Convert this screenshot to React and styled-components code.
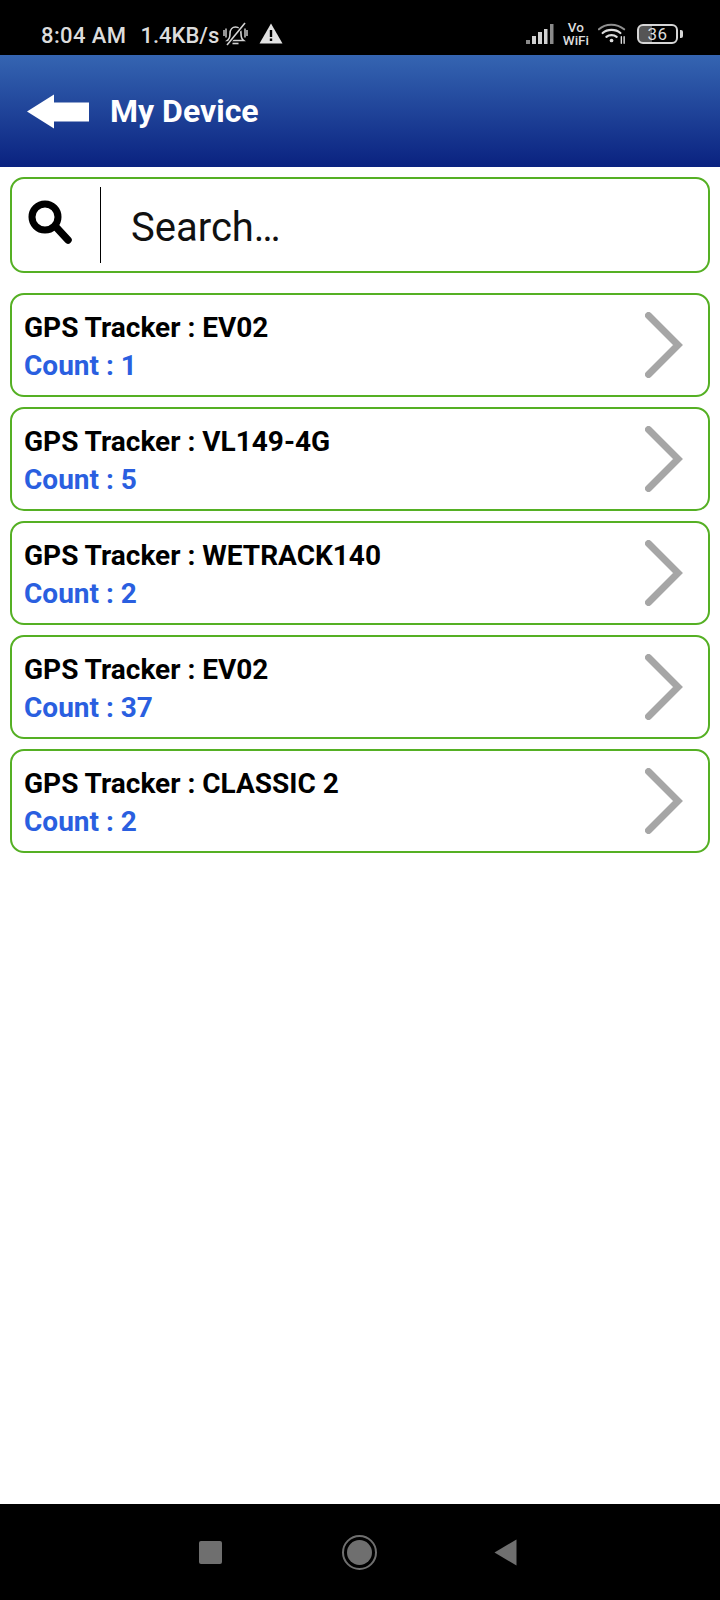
import React from "react";
import styled, { createGlobalStyle } from "styled-components";

const Global = createGlobalStyle`
  html, body { margin: 0; padding: 0; background: #fff; }
  body { font-family: Roboto, "Liberation Sans", sans-serif; }
`;

const Screen = styled.div`
  width: 720px;
  height: 1600px;
  display: flex;
  flex-direction: column;
  background: #fff;
  overflow: hidden;
`;

const StatusBar = styled.div`
  height: 55px;
  flex: none;
  background: #000;
  color: #dcdcdc;
  display: flex;
  align-items: center;
  padding: 15px 37px 0 41px;
  box-sizing: border-box;
  font-size: 22px;
  font-weight: 500;
`;

const StatusTime = styled.span`
  margin-right: 14px;
  white-space: nowrap;
  letter-spacing: 0.4px;
`;

const StatusSpeed = styled.span`
  white-space: nowrap;
`;

const StatusSpacer = styled.div`
  flex: 1;
`;

const StatusGroup = styled.div`
  display: flex;
  align-items: center;
  margin-top: -3px;
`;

const VoWifi = styled.div`
  font-size: 13.5px;
  line-height: 13px;
  text-align: center;
  font-weight: 500;
  margin: 0 9px 0 9px;
  color: #dcdcdc;
`;

const Battery = styled.div`
  width: 37px;
  height: 16px;
  border: 2px solid #d6d6d6;
  border-radius: 6px;
  box-sizing: content-box;
  display: flex;
  align-items: center;
  justify-content: center;
  font-size: 17px;
  font-weight: 400;
  letter-spacing: 0.5px;
  margin-left: 11px;
  overflow: hidden;
  background: linear-gradient(90deg, #555 0 36%, #000 36%);
`;

const BatteryCap = styled.div`
  width: 3px;
  height: 8px;
  background: #d6d6d6;
  border-radius: 0 2px 2px 0;
  margin-left: 2px;
`;

const Header = styled.header`
  height: 112px;
  flex: none;
  background: linear-gradient(180deg, #3565b2 0%, #0a2280 100%);
  display: flex;
  align-items: center;
  padding-left: 27px;
  gap: 20px;
`;

const Title = styled.h1`
  margin: 0;
  font-size: 32px;
  font-weight: 700;
  color: #fff;
  line-height: 1;
`;

const Content = styled.main`
  flex: 1;
  padding: 10px 10px 0;
  display: flex;
  flex-direction: column;
`;

const SearchBox = styled.div`
  height: 96px;
  box-sizing: border-box;
  border: 2px solid #55b024;
  border-radius: 14px;
  display: flex;
  align-items: center;
  margin-bottom: 20px;
`;

const SearchIconWrap = styled.div`
  width: 88px;
  flex: none;
  display: flex;
  justify-content: flex-start;
  padding-left: 15px;
  box-sizing: border-box;
  margin-top: -6px;
`;

const Divider = styled.div`
  width: 1px;
  height: 76px;
  background: #000;
  flex: none;
`;

const SearchText = styled.div`
  font-size: 40px;
  font-weight: 400;
  color: #111;
  margin-left: 30px;
  margin-top: 4px;
`;

const List = styled.div`
  display: flex;
  flex-direction: column;
  gap: 10px;
`;

const Card = styled.div`
  height: 104px;
  box-sizing: border-box;
  border: 2px solid #55b024;
  border-radius: 14px;
  padding: 0 25px 0 12px;
  display: flex;
  align-items: center;
  justify-content: space-between;
`;

const CardText = styled.div`
  display: flex;
  flex-direction: column;
  gap: 6px;
  padding-top: 4px;
`;

const Name = styled.div`
  font-size: 28px;
  font-weight: 700;
  line-height: 32px;
  color: #000;
`;

const Count = styled.div`
  font-size: 28px;
  font-weight: 700;
  line-height: 32px;
  color: #2a5fe0;
`;

const NavBar = styled.nav`
  height: 96px;
  flex: none;
  background: #000;
  display: flex;
  align-items: center;
  gap: 117px;
  padding-left: 199px;
  box-sizing: border-box;
`;

const NavSquare = styled.div`
  width: 23px;
  height: 23px;
  background: #6f6f6f;
  border-radius: 2px;
  margin-right: 3px;
`;

const NavCircle = styled.div`
  width: 35px;
  height: 35px;
  box-sizing: border-box;
  border: 2.5px solid #6f6f6f;
  border-radius: 50%;
  display: flex;
  align-items: center;
  justify-content: center;
  &::after {
    content: "";
    width: 25px;
    height: 25px;
    border-radius: 50%;
    background: #6f6f6f;
  }
`;

const MutedBell = () => (
  <svg width="25" height="24" viewBox="0 0 25 24" fill="none" stroke="#d4d4d4" strokeWidth="1.600" style={{ marginLeft: 4, marginTop: -3 }}>
    <path d="M4.500 18.500c2-1.500 2.500-3.500 2.500-7 0-4 2.500-6.500 5.500-6.500s5.500 2.500 5.500 6.500c0 3.500.5 5.500 2.500 7z" />
    <path d="M9.500 21.500h6" />
    <path d="M1 8v6M3 6.500v9M22 6.500v9M24 8v6" strokeWidth="1.400" />
    <path d="M22 1 4 23" stroke="#000" strokeWidth="3.500" />
    <path d="M22 1 4 23" />
  </svg>
);

const Warning = () => (
  <svg width="24" height="21" viewBox="0 0 24 21" style={{ marginLeft: 11, marginTop: -3 }}>
    <path d="M12 0.500 23.500 20.500H0.500Z" fill="#e2e2e2" />
    <rect x="10.800" y="7" width="2.400" height="7" fill="#000" />
    <rect x="10.800" y="15.500" width="2.400" height="2.500" fill="#000" />
  </svg>
);

const Signal = () => (
  <svg width="28" height="20" viewBox="0 0 28 20">
    <rect x="0" y="16" width="4" height="4" fill="#8a8a8a" />
    <rect x="6" y="12" width="4" height="8" fill="#d0d0d0" />
    <rect x="12" y="8" width="4" height="12" fill="#d0d0d0" />
    <rect x="18" y="5" width="3.500" height="15" fill="#d0d0d0" />
    <rect x="24" y="0" width="3.500" height="20" fill="#8a8a8a" />
  </svg>
);

const Wifi = () => (
  <svg width="28" height="23" viewBox="0 0 30 23" fill="none" stroke="#dcdcdc" strokeLinecap="round">
    <path d="M1 7c7-6.500 19-6.500 27 0" strokeWidth="2.200" stroke="#8f8f8f" />
    <path d="M5 11c5-4.500 14-4.500 19 0" strokeWidth="2.400" />
    <path d="M9 15c3-2.500 8-2.500 11 0" strokeWidth="2.400" />
    <circle cx="14.500" cy="19" r="2" fill="#dcdcdc" stroke="none" />
    <path d="M25 15v7M28 15v7" strokeWidth="1.500" />
  </svg>
);

const BackArrow = () => (
  <svg width="63" height="35" viewBox="0 0 63 35">
    <defs>
      <filter id="soft" x="-5%" y="-5%" width="110%" height="110%">
        <feGaussianBlur stdDeviation="0.6" />
      </filter>
    </defs>
    <path d="M0 17.500 27 0.500V8.500H62V27.500H27V34.500Z" fill="#fff" filter="url(#soft)" />
  </svg>
);

const SearchIcon = () => (
  <svg width="46" height="46" viewBox="0 0 46 46" fill="none" stroke="#000" style={{ filter: "blur(0.4px)" }}>
    <circle cx="18" cy="18" r="13" strokeWidth="7" />
    <path d="M29 28 41 41" strokeWidth="7.500" strokeLinecap="round" />
  </svg>
);

const Chevron = () => (
  <svg width="38" height="66" viewBox="0 0 38 66" fill="none" stroke="#a6a6a6" strokeWidth="7" strokeLinecap="round" style={{ filter: "blur(0.6px)" }}>
    <path d="M3.500 3.500 33 33 3.500 62.500" />
  </svg>
);

const BackTriangle = () => (
  <svg width="23" height="27" viewBox="0 0 23 27">
    <path d="M22.500 0.500V26.500L0.500 13.500Z" fill="#6f6f6f" />
  </svg>
);

const devices = [
  { name: "EV02", count: 1 },
  { name: "VL149-4G", count: 5 },
  { name: "WETRACK140", count: 2 },
  { name: "EV02", count: 37 },
  { name: "CLASSIC 2", count: 2 },
];

export default function App() {
  return (
    <Screen>
      <Global />
      <StatusBar>
        <StatusTime>8:04 AM</StatusTime>
        <StatusSpeed>1.4KB/s</StatusSpeed>
        <MutedBell />
        <Warning />
        <StatusSpacer />
        <StatusGroup>
          <Signal />
          <VoWifi>
            Vo
            <br />
            WiFi
          </VoWifi>
          <Wifi />
          <Battery>36</Battery>
          <BatteryCap />
        </StatusGroup>
      </StatusBar>
      <Header>
        <BackArrow />
        <Title>My Device</Title>
      </Header>
      <Content>
        <SearchBox>
          <SearchIconWrap>
            <SearchIcon />
          </SearchIconWrap>
          <Divider />
          <SearchText>Search…</SearchText>
        </SearchBox>
        <List>
          {devices.map((d, i) => (
            <Card key={i}>
              <CardText>
                <Name>GPS Tracker : {d.name}</Name>
                <Count>Count : {d.count}</Count>
              </CardText>
              <Chevron />
            </Card>
          ))}
        </List>
      </Content>
      <NavBar>
        <NavSquare />
        <NavCircle />
        <BackTriangle />
      </NavBar>
    </Screen>
  );
}
